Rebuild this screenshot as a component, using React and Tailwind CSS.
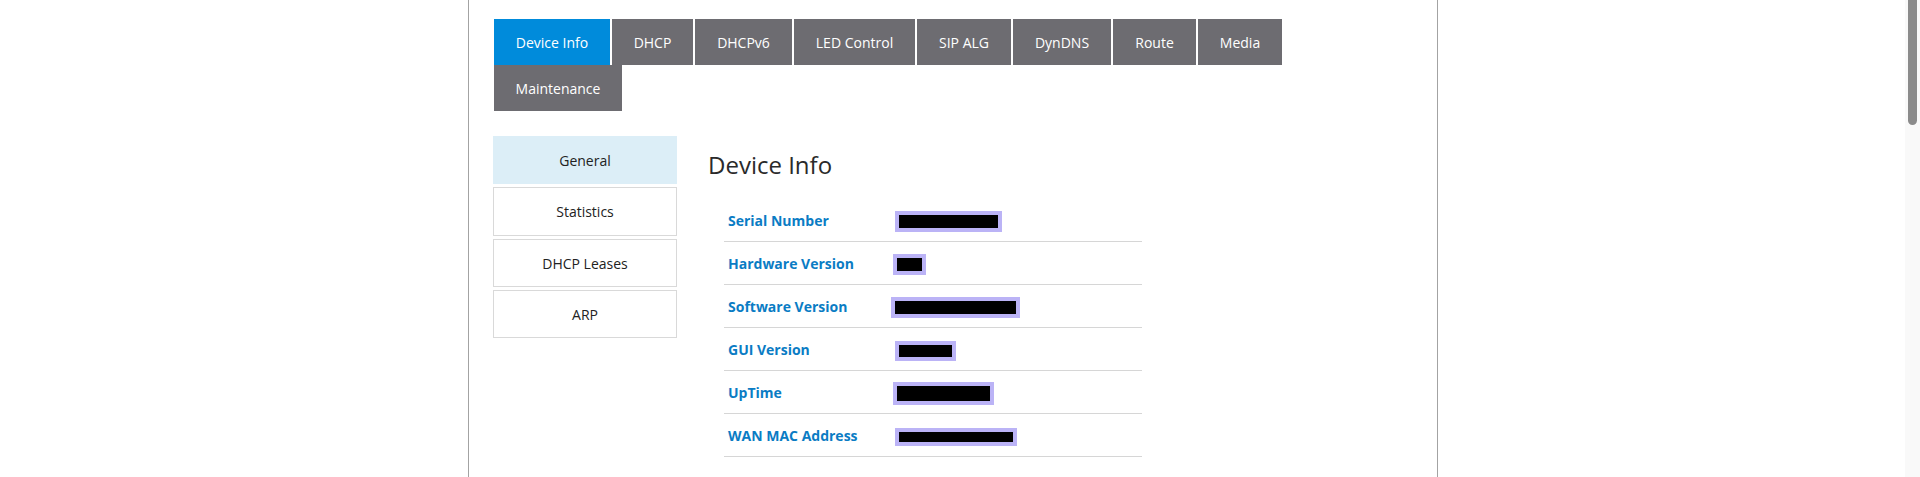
import React from "react";

const tabs = [
  { label: "Device Info", w: "w-[116px]", active: true },
  { label: "DHCP", w: "w-[81px]" },
  { label: "DHCPv6", w: "w-[97px]" },
  { label: "LED Control", w: "w-[121px]" },
  { label: "SIP ALG", w: "w-[94px]" },
  { label: "DynDNS", w: "w-[98px]" },
  { label: "Route", w: "w-[83px]" },
  { label: "Media", w: "w-[84px]" },
  { label: "Maintenance", w: "w-[128px]" },
];

const side = [
  { label: "Statistics", h: "h-[49px]" },
  { label: "DHCP Leases", h: "h-[48px]" },
  { label: "ARP", h: "h-[48px]" },
];

const rows = [
  { label: "Serial Number", box: "ml-[4px] w-[107px] h-[21px]" },
  { label: "Hardware Version", box: "ml-[2px] w-[33px] h-[21px]" },
  { label: "Software Version", box: "ml-[0px] w-[129px] h-[21px]" },
  { label: "GUI Version", box: "ml-[4px] w-[61px] h-[20px]" },
  { label: "UpTime", box: "ml-[2px] w-[101px] h-[23px]" },
  { label: "WAN MAC Address", box: "ml-[4px] w-[122px] h-[18px]" },
];

export default function App() {
  return (
    <div className="flex h-[477px] w-full overflow-hidden bg-white font-['Open_Sans',sans-serif]">
      <div className="flex-1 min-w-0">
        <div className="ml-[468px] h-[477px] w-[970px] border-x border-[#a3a3a3] bg-white pt-[19px] pl-[24px]">
          {/* Tabs */}
          <div className="ml-[1px] flex w-[900px] flex-wrap gap-x-[2px]">
            {tabs.map((t) => (
              <div
                key={t.label}
                className={`${t.w} flex h-[46px] items-center justify-center text-[14px] text-white ${
                  t.active ? "bg-[#008bdb]" : "bg-[#6d6c71]"
                }`}
              >
                {t.label}
              </div>
            ))}
          </div>

          <div className="mt-[25px] flex">
            {/* Sidebar */}
            <div className="flex w-[184px] flex-col gap-[3px]">
              <div className="flex h-[48px] items-center justify-center bg-[#dceef7] text-[14px] text-[#222]">
                General
              </div>
              {side.map((s) => (
                <div
                  key={s.label}
                  className={`${s.h} flex items-center justify-center border border-[#d9d9d9] bg-white text-[14px] text-[#222]`}
                >
                  {s.label}
                </div>
              ))}
            </div>

            {/* Content */}
            <div className="ml-[31px] flex-1">
              <h1 className="mt-[13px] text-[24px] leading-[32px] font-normal text-[#2a2a2a]">Device Info</h1>
              <div className="mt-[18px] ml-[16px] w-[418px]">
                {rows.map((r) => (
                  <div
                    key={r.label}
                    className="flex h-[43px] items-center border-b border-[#d6d6d6]"
                  >
                    <div className="w-[167px] pl-[4px] text-[14px] font-bold text-[#0a7cc4]">
                      {r.label}
                    </div>
                    <span
                      className={`${r.box} mt-[3px] box-border inline-block border-4 border-[#bbb3f6] bg-black`}
                    />
                  </div>
                ))}
              </div>
            </div>
          </div>
        </div>
      </div>
      {/* Scrollbar */}
      <div className="flex w-[15px] flex-col items-center bg-[#f9f9f9] pl-[2px] pr-[3px]">
        <div className="h-[125px] w-[9px] rounded-b-full bg-[#8b8b8b]" />
      </div>
    </div>
  );
}
